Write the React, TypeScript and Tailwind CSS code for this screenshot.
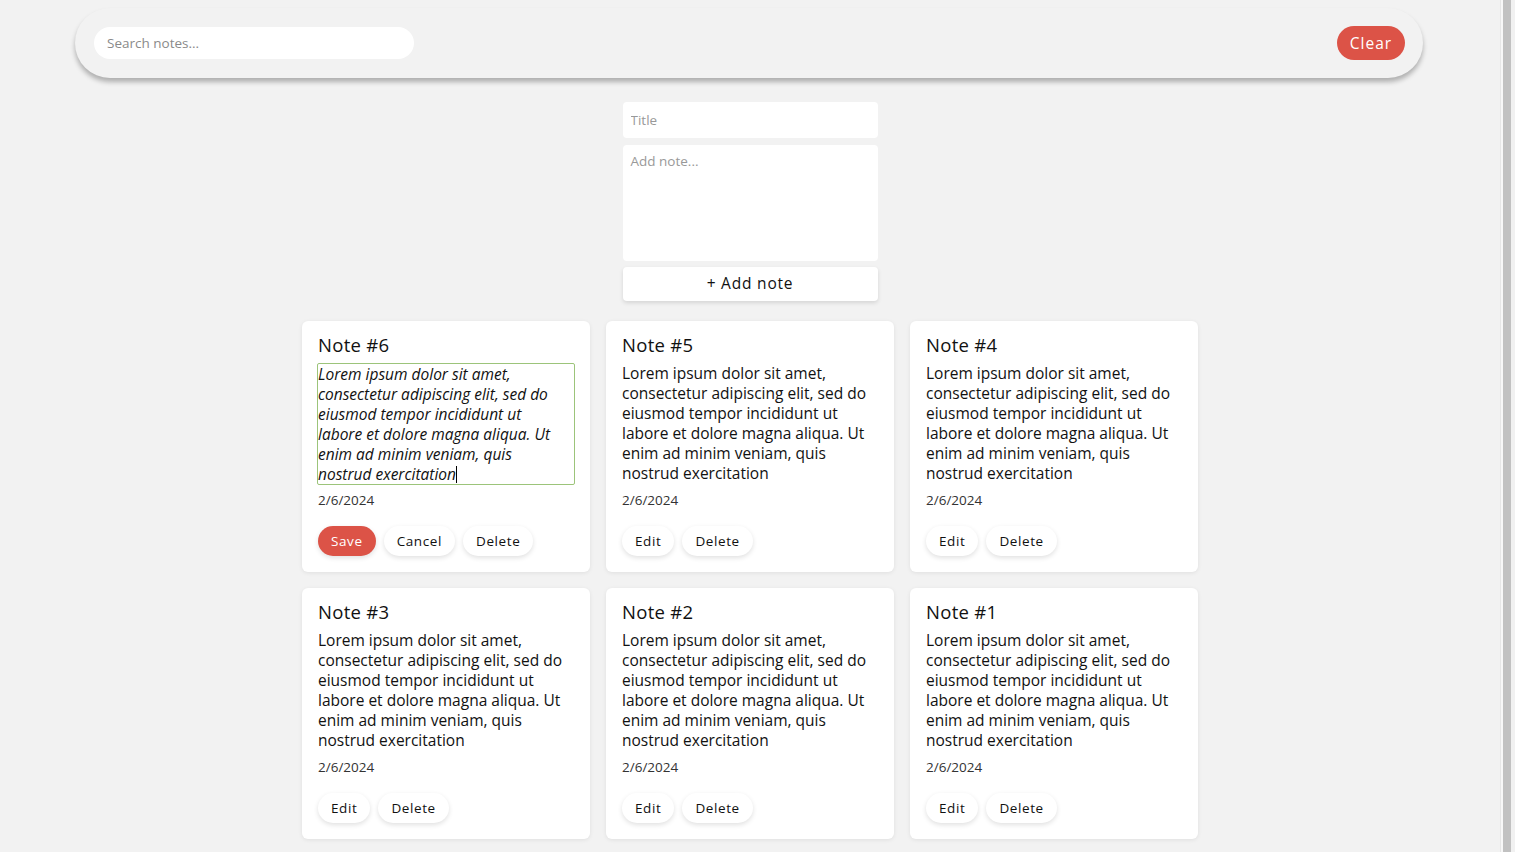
import React from "react";

const LINES = [
  "Lorem ipsum dolor sit amet,",
  "consectetur adipiscing elit, sed do",
  "eiusmod tempor incididunt ut",
  "labore et dolore magna aliqua. Ut",
  "enim ad minim veniam, quis",
  "nostrud exercitation",
];

function Btn({ children, red }: { children: React.ReactNode; red?: boolean }) {
  return (
    <button
      className={
        red
          ? "h-[30px] px-[13px] rounded-full bg-[#dc5347] text-white text-[13.5px] tracking-[0.6px] shadow-[0_2px_5px_rgba(0,0,0,0.12)]"
          : "h-[30px] px-[13px] rounded-full bg-white text-[#111] text-[13.5px] tracking-[0.6px] shadow-[0_2px_5px_rgba(0,0,0,0.12)]"
      }
    >
      {children}
    </button>
  );
}

function Card({ n, editing }: { n: number; editing?: boolean }) {
  return (
    <div className="bg-white rounded-[6px] shadow-[0_1px_4px_rgba(0,0,0,0.08)] px-4 pt-[10px] pb-4 flex flex-col">
      <h3 className="text-[18.5px] leading-[27px] text-[#111] tracking-[0.3px]">Note #{n}</h3>
      {editing ? (
        <div className="mt-[5px] -ml-px w-[258px] h-[122px] border border-[#9cc47a] rounded-[2px] text-[15.5px] leading-[20px] italic text-[#111]">
          {LINES.map((l, i) => (
            <span key={i} className="block whitespace-nowrap">
              {l}
              {i === LINES.length - 1 && (
                <span className="inline-block w-px h-[17px] bg-black align-[-3px]" />
              )}
            </span>
          ))}
        </div>
      ) : (
        <div className="mt-[5px] text-[15.5px] leading-[20px] text-[#111]">
          {LINES.map((l, i) => (
            <span key={i} className="block whitespace-nowrap">
              {l}
            </span>
          ))}
        </div>
      )}
      <div className={editing ? "mt-[5px] text-[13.5px] leading-[20px] text-[#333]" : "mt-[7px] text-[13.5px] leading-[20px] text-[#333]"}>2/6/2024</div>
      <div className="mt-4 flex gap-2">
        {editing ? (
          <>
            <Btn red>Save</Btn>
            <Btn>Cancel</Btn>
            <Btn>Delete</Btn>
          </>
        ) : (
          <>
            <Btn>Edit</Btn>
            <Btn>Delete</Btn>
          </>
        )}
      </div>
    </div>
  );
}

export default function App() {
  return (
    <div
      className="flex bg-[#f2f2f2] min-h-screen"
      style={{ fontFamily: '"Open Sans", "DejaVu Sans", sans-serif' }}
    >
      <main className="flex-1 pb-[12px]">
        <header className="ml-[75px] mr-[77px] pt-[8px]">
          <div className="h-[70px] rounded-[35px] bg-[#f2f2f2] shadow-[0_4px_5px_rgba(0,0,0,0.28)] flex items-center justify-between pl-[19px] pr-[18px]">
            <input
              className="w-[320px] h-[32px] rounded-full bg-white px-[13px] text-[13.5px] outline-none placeholder:text-[#8a8a8a]"
              placeholder="Search notes..."
            />
            <button className="h-[34px] w-[68px] rounded-full bg-[#dc5347] text-white text-[15.5px] leading-[32px] tracking-[1px]">
              Clear
            </button>
          </div>
        </header>

        <div className="mx-auto mt-[24px] w-[255px] flex flex-col">
          <input
            className="h-[36px] rounded-[4px] bg-white px-[8px] text-[13.5px] outline-none placeholder:text-[#999]"
            placeholder="Title"
          />
          <textarea
            className="mt-[7px] h-[116px] rounded-[4px] bg-white px-[8px] py-[6px] text-[13.5px] outline-none resize-none placeholder:text-[#999]"
            placeholder="Add note..."
          />
          <button className="mt-[6px] h-[34px] rounded-[4px] bg-white text-[15.5px] tracking-[0.8px] text-[#111] shadow-[0_2px_4px_rgba(0,0,0,0.12)]">
            + Add note
          </button>
        </div>

        <div className="mx-auto mt-[20px] w-[896px] grid grid-cols-[288px_288px_288px] gap-4">
          <Card n={6} editing />
          <Card n={5} />
          <Card n={4} />
          <Card n={3} />
          <Card n={2} />
          <Card n={1} />
        </div>
      </main>
      <aside className="w-[15px] flex shrink-0">
        <div className="w-px bg-[#e6e6e6]" />
        <div className="w-[2px] bg-[#f7f7f7]" />
        <div className="w-[8px] bg-[#c1c1c1]" />
        <div className="w-[4px] bg-[#f1f1f1]" />
      </aside>
    </div>
  );
}
